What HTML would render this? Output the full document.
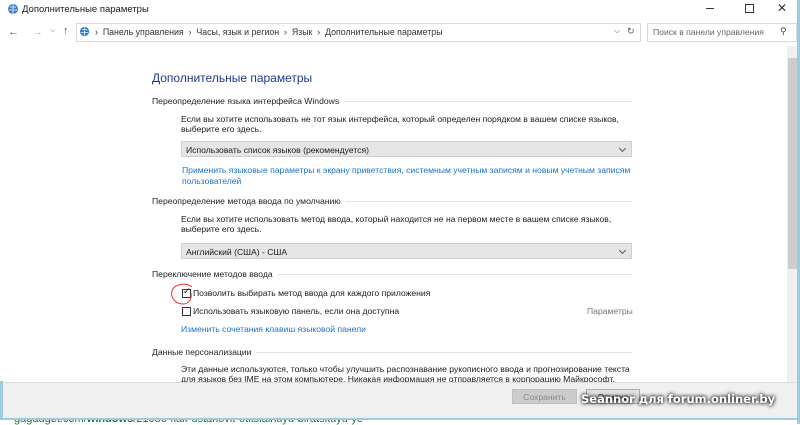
<!DOCTYPE html>
<html><head><meta charset="utf-8"><style>
*{margin:0;padding:0;box-sizing:border-box}
body{width:800px;height:424px;overflow:hidden;background:#fff;font-family:"Liberation Sans",sans-serif;font-size:8.6px;color:#1a1a1a;position:relative}
.a{position:absolute;white-space:nowrap}
.hd{color:#1e3a8a;font-size:12px}
.sec{position:absolute;left:152px;width:480px;display:flex;align-items:center;color:#222;white-space:nowrap}
.sec:after{content:"";flex:1;height:1px;background:#e2e2e2;margin-left:5px}
.dd{position:absolute;left:181px;width:451px;height:16px;background:#e5e5e5;border:1px solid #cfcfcf;padding:3px 0 0 4px}
.dd:after{content:"";position:absolute;right:6px;top:4px;width:4px;height:4px;border-right:1px solid #555;border-bottom:1px solid #555;transform:rotate(45deg)}
.lk{color:#1a73c9}
.cb{position:absolute;width:9px;height:9px;border:1px solid #333;background:#fff}
</style></head><body>
<svg class="a" style="left:7px;top:3px" width="13" height="13" viewBox="0 0 13 13"><circle cx="6" cy="6" r="5" fill="#3b7fc4"/><path d="M3 4h6M2 7h8M6 1v10" stroke="#bfe0f7" stroke-width="1"/></svg>
<div class="a" style="left:22px;top:4px;font-size:9.5px">Дополнительные параметры</div>
<div class="a" style="left:706px;top:8px;width:8px;height:1px;background:#333"></div>
<div class="a" style="left:745px;top:4px;width:9px;height:9px;border:1px solid #333"></div>
<div class="a" style="left:777px;top:1px;font-size:12px;color:#333">✕</div>
<div class="a" style="left:8px;top:26px;font-size:11px;color:#555">←</div>
<div class="a" style="left:32px;top:26px;font-size:11px;color:#bbb">→</div>
<div class="a" style="left:50px;top:27px;font-size:7px;color:#666">⌵</div>
<div class="a" style="left:63px;top:25px;font-size:11px;color:#555">↑</div>
<div class="a" style="left:76px;top:23px;width:565px;height:19px;border:1px solid #d9d9d9"></div>
<svg class="a" style="left:79px;top:26px" width="12" height="12" viewBox="0 0 13 13"><circle cx="6" cy="6" r="5" fill="#3b7fc4"/><path d="M3 4h6M2 7h8M6 1v10" stroke="#bfe0f7" stroke-width="1"/></svg>
<div class="a" style="left:95px;top:27px;color:#333;font-size:8.8px">›&nbsp; Панель управления &nbsp;›&nbsp; Часы, язык и регион &nbsp;›&nbsp; Язык &nbsp;›&nbsp; Дополнительные параметры</div>
<div class="a" style="left:614px;top:26px;font-size:8px;color:#555">⌵</div>
<div class="a" style="left:627px;top:26px;font-size:9px;color:#555">↻</div>
<div class="a" style="left:647px;top:23px;width:150px;height:19px;border:1px solid #d9d9d9"></div>
<div class="a" style="left:653px;top:27px;color:#666">Поиск в панели управления</div>
<div class="a" style="left:780px;top:26px;font-size:9px;color:#444">⚲</div>
<div class="a" style="left:787px;top:46px;width:10px;height:336px;background:#f0f0f0"></div>
<div class="a" style="left:788px;top:58px;width:9px;height:211px;background:#cdcdcd"></div>
<div class="a" style="left:797px;top:0;width:3px;height:424px;background:#9ccbe3"></div>
<div class="a hd" style="left:152px;top:71px">Дополнительные параметры</div>
<div class="sec" style="top:96px">Переопределение языка интерфейса Windows</div>
<div class="a" style="left:181px;top:114px">Если вы хотите использовать не тот язык интерфейса, который определен порядком в вашем списке языков,</div>
<div class="a" style="left:181px;top:124px">выберите его здесь.</div>
<div class="dd" style="top:141px">Использовать список языков (рекомендуется)</div>
<div class="a lk" style="left:182px;top:165px">Применить языковые параметры к экрану приветствия, системным учетным записям и новым учетным записям</div>
<div class="a lk" style="left:182px;top:176px">пользователей</div>
<div class="sec" style="top:196px">Переопределение метода ввода по умолчанию</div>
<div class="a" style="left:181px;top:214px">Если вы хотите использовать метод ввода, который находится не на первом месте в вашем списке языков,</div>
<div class="a" style="left:181px;top:224px">выберите его здесь.</div>
<div class="dd" style="top:243px">Английский (США) - США</div>
<div class="sec" style="top:269px">Переключение методов ввода</div>
<div class="cb" style="left:182px;top:289px"></div>
<div class="a" style="left:183px;top:286px;font-size:9px">✓</div>
<div class="a" style="left:193px;top:288px">Позволить выбирать метод ввода для каждого приложения</div>
<div class="cb" style="left:182px;top:307px"></div>
<div class="a" style="left:193px;top:306px">Использовать языковую панель, если она доступна</div>
<div class="a" style="left:587px;top:306px;color:#777">Параметры</div>
<div class="a lk" style="left:181px;top:324px">Изменить сочетания клавиш языковой панели</div>
<svg class="a" style="left:168px;top:282px" width="30" height="26"><path d="M24 5C18 0 6 2 4 9c-2 7 4 13 11 13 6 0 9-5 8-11" fill="none" stroke="#e33" stroke-width="1"/></svg>
<div class="sec" style="top:347px">Данные персонализации</div>
<div class="a" style="left:181px;top:364px">Эти данные используются, только чтобы улучшить распознавание рукописного ввода и прогнозирование текста</div>
<div class="a" style="left:181px;top:374px">для языков без IME на этом компьютере. Никакая информация не отправляется в корпорацию Майкрософт.</div>
<div class="a" style="left:14px;top:413px;font-size:11px;color:#2a6e2a">gagadget.com/<b>windows</b>/21086-kak-ustanovit-otitsialnuyu-biratskuyu-ye</div>
<div class="a" style="left:0;top:382px;width:797px;height:36px;background:#f0f0f0;border-top:1px solid #dcdcdc"></div>
<div class="a" style="left:0;top:381px;width:3px;height:38px;background:#9ccbe3"></div>
<div class="a" style="left:0;top:418px;width:800px;height:2px;background:#9ccbe3"></div>
<div class="a" style="left:512px;top:389px;width:65px;height:15px;background:#ccc;border:1px solid #bfbfbf;color:#888;text-align:center;padding-top:2px">Сохранить</div>
<div class="a" style="left:586px;top:389px;width:54px;height:15px;background:#e1e1e1;border:1px solid #adadad;text-align:center;padding-top:2px">Отмена</div>
<div class="a" style="left:581px;top:392px;font-size:11.5px;font-weight:bold;color:#fff;text-shadow:0 0 3px #000,0 0 5px #333;font-family:'DejaVu Sans',sans-serif">Seannor для forum.onliner.by</div>
</body></html>
